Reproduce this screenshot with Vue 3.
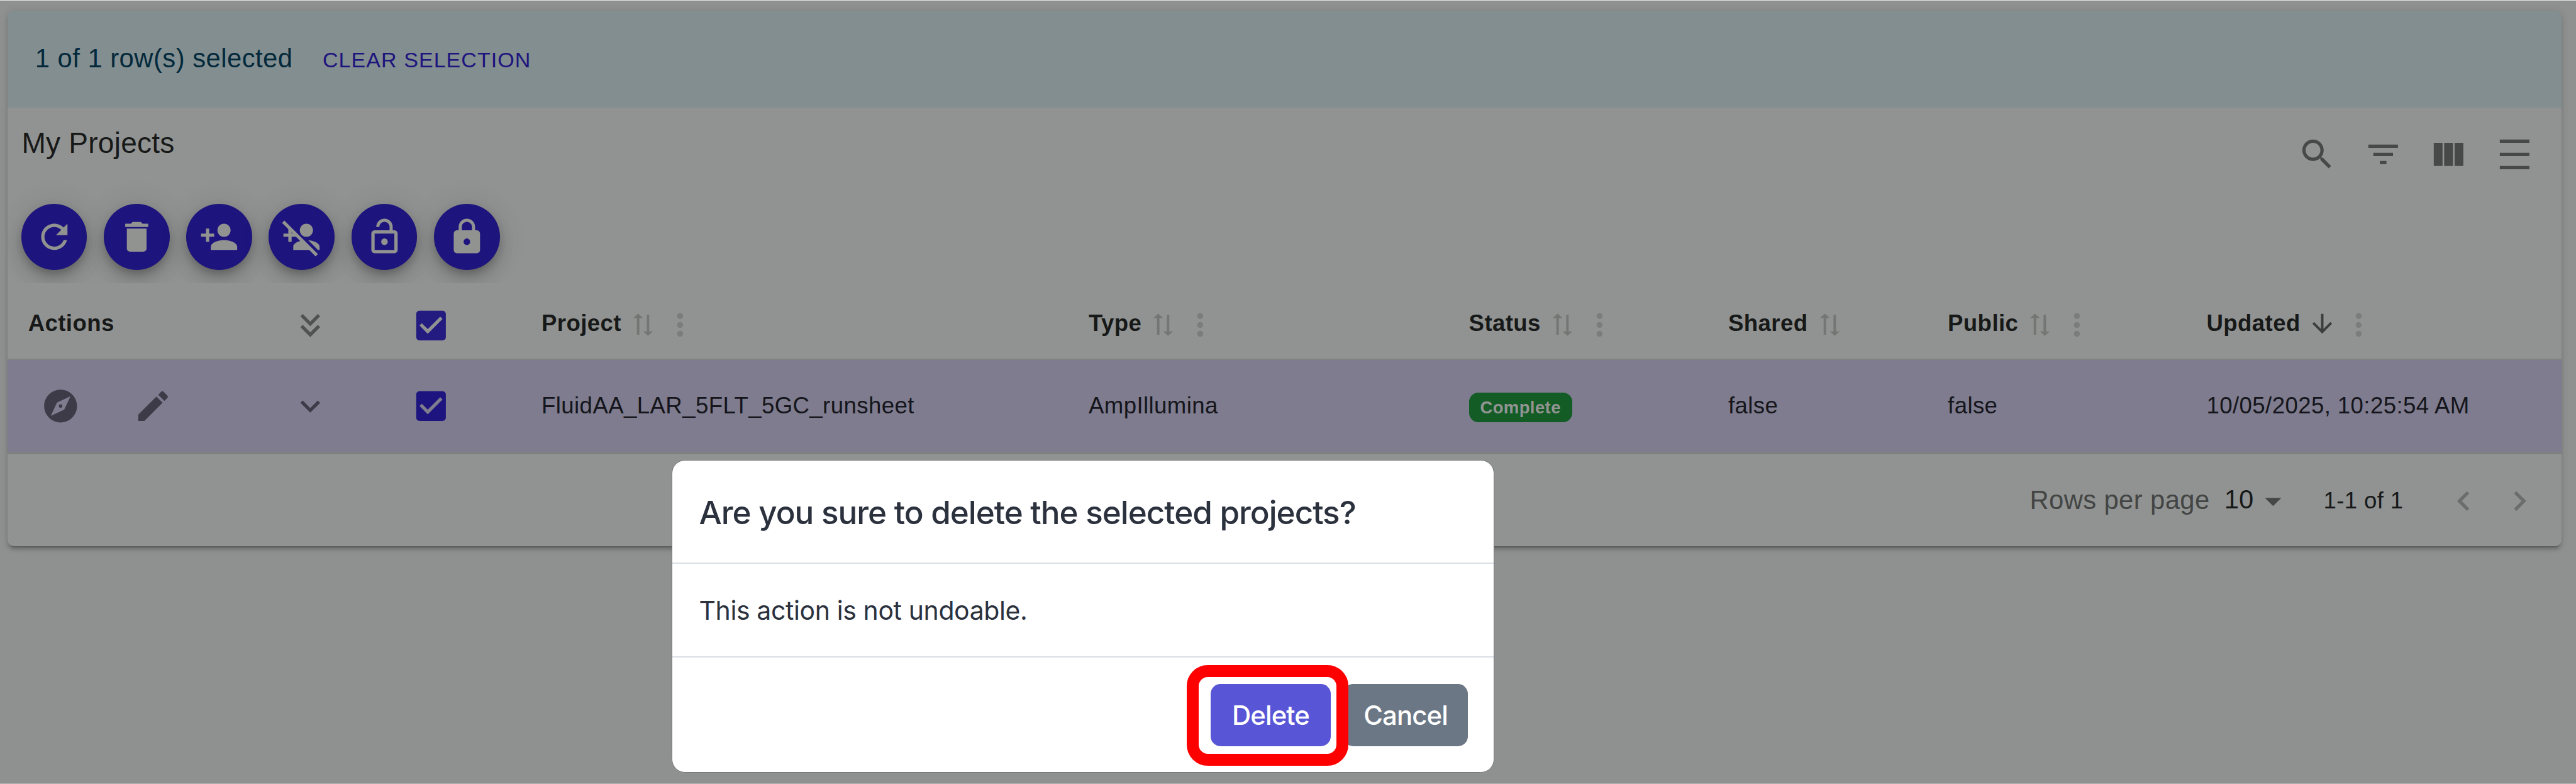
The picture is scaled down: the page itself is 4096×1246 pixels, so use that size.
<script setup>
const icons = {
  refresh: 'M17.65 6.35C16.2 4.9 14.21 4 12 4c-4.42 0-7.99 3.58-7.99 8s3.57 8 7.99 8c3.73 0 6.84-2.55 7.73-6h-2.08c-.82 2.33-3.04 4-5.65 4-3.31 0-6-2.69-6-6s2.69-6 6-6c1.66 0 3.14.69 4.22 1.78L13 11h7V4l-2.35 2.35z',
  trash: 'M6 19c0 1.1.9 2 2 2h8c1.1 0 2-.9 2-2V7H6v12zM19 4h-3.5l-1-1h-5l-1 1H5v2h14V4z',
  personAdd: 'M15 12c2.21 0 4-1.79 4-4s-1.79-4-4-4-4 1.79-4 4 1.79 4 4 4zm-9-2V7H4v3H1v2h3v3h2v-3h3v-2H6zm9 4c-2.67 0-8 1.34-8 4v2h16v-2c0-2.66-5.33-4-8-4z',
  lockOpen: 'M12 17c1.1 0 2-.9 2-2s-.9-2-2-2-2 .9-2 2 .9 2 2 2zm6-9h-1V6c0-2.76-2.24-5-5-5S7 3.24 7 6h1.9c0-1.71 1.39-3.1 3.1-3.1 1.71 0 3.1 1.39 3.1 3.1v2H6c-1.1 0-2 .9-2 2v10c0 1.1.9 2 2 2h12c1.1 0 2-.9 2-2V10c0-1.1-.9-2-2-2zm0 12H6V10h12v10z',
  lock: 'M18 8h-1V6c0-2.76-2.24-5-5-5S7 3.24 7 6v2H6c-1.1 0-2 .9-2 2v10c0 1.1.9 2 2 2h12c1.1 0 2-.9 2-2V10c0-1.1-.9-2-2-2zm-6 9c-1.1 0-2-.9-2-2s.9-2 2-2 2 .9 2 2-.9 2-2 2zm3.1-9H8.9V6c0-1.71 1.39-3.1 3.1-3.1 1.71 0 3.1 1.39 3.1 3.1v2z',
  search: 'M15.5 14h-.79l-.28-.27C15.41 12.59 16 11.11 16 9.5 16 5.91 13.09 3 9.5 3S3 5.91 3 9.5 5.91 16 9.5 16c1.61 0 3.09-.59 4.23-1.57l.27.28v.79l5 4.99L20.49 19l-4.99-5zm-6 0C7.01 14 5 11.99 5 9.5S7.01 5 9.5 5 14 7.01 14 9.5 11.99 14 9.5 14z',
  filter: 'M10 18h4v-2h-4v2zM3 6v2h18V6H3zm3 7h12v-2H6v2z',
  columns: 'M14.67 5v14H9.33V5h5.34zm1 14H21V5h-5.33v14zm-7.34 0V5H3v14h5.33z',
  density: 'M3 3h18v2H3zm0 16h18v2H3zm0-8h18v2H3z',
  doubleDown: 'M18 6.41 16.59 5 12 9.58 7.41 5 6 6.41l6 6zM18 13l-1.41-1.41L12 16.17l-4.59-4.58L6 13l6 6z',
  expand: 'M16.59 8.59 12 13.17 7.41 8.59 6 10l6 6 6-6z',
  checkbox: 'M19 3H5c-1.11 0-2 .9-2 2v14c0 1.1.89 2 2 2h14c1.11 0 2-.9 2-2V5c0-1.1-.89-2-2-2zm-9 14l-5-5 1.41-1.41L10 14.17l7.59-7.59L19 8l-9 9z',
  explore: 'M12 10.9c-.61 0-1.1.49-1.1 1.1s.49 1.1 1.1 1.1c.61 0 1.1-.49 1.1-1.1s-.49-1.1-1.1-1.1zM12 2C6.48 2 2 6.48 2 12s4.48 10 10 10 10-4.48 10-10S17.52 2 12 2zm2.19 12.19L6 18l3.81-8.19L18 6l-3.81 8.19z',
  edit: 'M3 17.25V21h3.75L17.81 9.94l-3.75-3.75L3 17.25zM20.71 7.04c.39-.39.39-1.02 0-1.41l-2.34-2.34c-.39-.39-1.02-.39-1.41 0l-1.83 1.83 3.75 3.75 1.83-1.83z',
  sort: 'm22 8-4-4v3H3v2h15v3l4-4zM2 16l4 4v-3h15v-2H6v-3l-4 4z',
  down: 'M20 12l-1.41-1.41L13 16.17V4h-2v12.17l-5.58-5.59L4 12l8 8 8-8z',
  more: 'M12 8c1.1 0 2-.9 2-2s-.9-2-2-2-2 .9-2 2 .9 2 2 2zm0 2c-1.1 0-2 .9-2 2s.9 2 2 2 2-.9 2-2-.9-2-2-2zm0 6c-1.1 0-2 .9-2 2s.9 2 2 2 2-.9 2-2-.9-2-2-2z',
  dropDown: 'M7 10l5 5 5-5z',
  prev: 'M15.41 7.41 14 6l-6 6 6 6 1.41-1.41L10.83 12z',
  next: 'M10 6 8.59 7.41 13.17 12l-4.58 4.59L10 18l6-6z',
}

const bulkActions = ['refresh', 'trash', 'personAdd', 'personAddOff', 'lockOpen', 'lock']
const tableTools = ['search', 'filter', 'columns', 'density']
const columns = [
  { label: 'Project', menu: true },
  { label: 'Type', menu: true },
  { label: 'Status', menu: true },
  { label: 'Shared', menu: false },
  { label: 'Public', menu: true },
  { label: 'Updated', menu: true, sorted: true },
]
</script>

<template>
  <div class="screen">
    <section class="card">
      <div class="banner">
        <span class="banner-text">1 of 1 row(s) selected</span>
        <button class="clear">CLEAR SELECTION</button>
      </div>

      <header class="toolbar">
        <div>
          <h1 class="title">My Projects</h1>
          <div class="fabs">
            <button v-for="name in bulkActions" :key="name" class="fab">
              <svg v-if="name === 'personAddOff'" viewBox="0 0 24 24" class="icon">
                <defs>
                  <mask id="slash-cut">
                    <rect width="24" height="24" fill="#fff" />
                    <path d="M14 13.3 24 23.3" stroke="#000" stroke-width="1.9" />
                  </mask>
                </defs>
                <path :d="icons.personAdd" mask="url(#slash-cut)" />
                <path d="M.9 2.8 21.3 23.2" stroke="currentColor" stroke-width="2" />
              </svg>
              <svg v-else viewBox="0 0 24 24" class="icon"><path :d="icons[name]" /></svg>
            </button>
          </div>
        </div>
        <div class="tools">
          <svg v-for="name in tableTools" :key="name" viewBox="0 0 24 24" class="icon"><path :d="icons[name]" /></svg>
        </div>
      </header>

      <div class="row head">
        <span>Actions</span>
        <span class="mid"><svg viewBox="0 0 24 24" class="icon grey"><path :d="icons.doubleDown" /></svg></span>
        <span class="mid select"><svg viewBox="0 0 24 24" class="icon check soft"><path :d="icons.checkbox" /></svg></span>
        <span v-for="col in columns" :key="col.label" class="label">
          <span>{{ col.label }}</span>
          <svg v-if="col.sorted" viewBox="0 0 24 24" class="sort active"><path :d="icons.down" /></svg>
          <svg v-else viewBox="0 0 24 24" class="sort idle"><path :d="icons.sort" /></svg>
          <svg v-if="col.menu" viewBox="0 0 24 24" class="more"><path :d="icons.more" /></svg>
        </span>
      </div>

      <div class="row item">
        <span class="row-actions">
          <svg viewBox="0 0 24 24" class="icon"><path :d="icons.explore" /></svg>
          <svg viewBox="0 0 24 24" class="icon"><path :d="icons.edit" /></svg>
        </span>
        <span class="mid"><svg viewBox="0 0 24 24" class="icon dark"><path :d="icons.expand" /></svg></span>
        <span class="mid select"><svg viewBox="0 0 24 24" class="icon check"><path :d="icons.checkbox" /></svg></span>
        <span class="val">FluidAA_LAR_5FLT_5GC_runsheet</span>
        <span class="val">AmpIllumina</span>
        <span><span class="badge">Complete</span></span>
        <span class="val">false</span>
        <span class="val">false</span>
        <span class="val">10/05/2025, 10:25:54 AM</span>
      </div>

      <footer class="pager">
        <span class="rpp">Rows per page</span>
        <span class="size">10</span>
        <svg viewBox="0 0 24 24" class="icon caret"><path :d="icons.dropDown" /></svg>
        <span class="range">1-1 of 1</span>
        <svg viewBox="0 0 24 24" class="icon nav"><path :d="icons.prev" /></svg>
        <svg viewBox="0 0 24 24" class="icon nav"><path :d="icons.next" /></svg>
      </footer>
    </section>

    <div class="modal">
      <div class="modal-head">Are you sure to delete the selected projects?</div>
      <div class="modal-body">This action is not undoable.</div>
      <div class="modal-foot">
        <button class="btn primary"><span>Delete</span></button>
        <button class="btn secondary"><span>Cancel</span></button>
      </div>
      <div class="highlight"></div>
    </div>
  </div>
</template>

<style>
body {
  margin: 0;
  overflow: hidden;
}
</style>

<style scoped>
.screen {
  position: relative;
  zoom: 0.930909;
  box-sizing: border-box;
  width: 4400px;
  height: 1338.5px;
  padding: 17px 24.5px 0 13px;
  overflow: hidden;
  border-top: 2px solid #dfe4e4;
  border-bottom: 1px solid #b4b6b5;
  background: #8f9190;
  font-family: "Liberation Sans", Arial, sans-serif;
  color: #171918;
}
.screen * {
  box-sizing: border-box;
}
.icon {
  display: block;
  width: 67.4px;
  height: 67.4px;
  fill: currentColor;
  flex: none;
}
button {
  border: 0;
  padding: 0;
  margin: 0;
  font: inherit;
  color: inherit;
}
.card {
  height: 914px;
  border-radius: 11px;
  background: #919392;
  box-shadow: 0 8px 3px -6px rgba(0, 0, 0, 0.2), 0 5.5px 5.5px 0 rgba(0, 0, 0, 0.14), 0 2px 14px 0 rgba(0, 0, 0, 0.12);
}
.banner {
  display: flex;
  align-items: center;
  height: 166px;
  padding-left: 47px;
  border-radius: 11px 11px 0 0;
  background: #828e90;
}
.banner-text {
  padding-bottom: 2px;
  font-size: 44.9px;
  letter-spacing: 0.5px;
  color: #03293b;
}
.clear {
  margin: 2px 0 0 51px;
  background: none;
  font-size: 36.6px;
  letter-spacing: 1.1px;
  color: #1e147e;
}
.toolbar {
  display: flex;
  justify-content: space-between;
  height: 299px;
  padding: 28px 46.5px 0 23px;
  overflow: hidden;
}
.title {
  margin: 0;
  padding-left: 1px;
  font-size: 49.5px;
  line-height: 66px;
  font-weight: 400;
  letter-spacing: 0.25px;
}
.fabs {
  display: flex;
  gap: 28.4px;
  margin-top: 70.5px;
}
.fab {
  display: flex;
  align-items: center;
  justify-content: center;
  width: 112.6px;
  height: 112.6px;
  border-radius: 50%;
  background: #1e147d;
  color: #919391;
  box-shadow: 0 8.4px 14px -3px rgba(0, 0, 0, 0.2), 0 17px 28px 0 rgba(0, 0, 0, 0.14), 0 3px 50px 0 rgba(0, 0, 0, 0.12);
}
.tools {
  display: flex;
  gap: 45.1px;
  padding-top: 18px;
  color: #474948;
}
.row {
  display: grid;
  grid-template-columns: 399.5px 166px 311.5px 934.5px 649.5px 443px 375px 442px 1fr;
  align-items: center;
  padding-left: 35px;
  font-size: 39.3px;
  letter-spacing: 0.44px;
  white-space: nowrap;
}
.head {
  height: 131px;
  padding-top: 10px;
  border-bottom: 3px solid #818380;
  font-weight: 700;
}
.label {
  display: flex;
  align-items: center;
}
.mid {
  display: flex;
  justify-content: center;
}
.head .mid {
  padding-top: 7px;
}
.select {
  padding-right: 66px;
}
.grey {
  color: #505251;
}
.dark {
  color: #3c3b47;
}
.check {
  color: #1e147f;
}
.check.soft {
  color: #231b80;
}
.sort {
  width: 50.5px;
  height: 50.5px;
  margin-left: 12px;
  fill: #747674;
}
.sort.idle {
  transform: rotate(-90deg) scaleX(0.9) translateX(-2px);
}
.sort.active {
  margin-top: 1px;
  fill: #3c3e3d;
}
.more {
  width: 61px;
  height: 61px;
  margin: 4px 0 0 7px;
  fill: #7b7d7c;
}
.item {
  height: 162px;
  background: #7e7c8e;
  border-bottom: 4px solid #7f817f;
  color: #15151b;
}
.row-actions {
  display: flex;
  gap: 90px;
  padding-left: 22px;
  color: #3c3b47;
}
.val {
  padding-bottom: 2px;
}
.badge {
  display: block;
  width: max-content;
  margin-top: 4px;
  padding: 10.3px 19.2px;
  border-radius: 16px;
  background: #135c26;
  font-size: 29.5px;
  line-height: 1;
  font-weight: 700;
  color: #929492;
}
.pager {
  display: flex;
  align-items: center;
  justify-content: flex-end;
  height: 156px;
  padding: 3px 38.5px 0 0;
  color: #171918;
}
.rpp {
  padding-bottom: 2px;
  font-size: 44.9px;
  letter-spacing: 0.42px;
  color: #434544;
}
.size {
  padding: 0 0 5px 25px;
  font-size: 44.9px;
}
.caret {
  margin: 0;
  color: #454746;
}
.range {
  padding: 0 0 0 52px;
  margin-right: 69px;
  font-size: 39.3px;
  letter-spacing: 0.42px;
}
.nav {
  color: #6b6d6c;
}
.nav + .nav {
  margin-left: 28px;
}
.modal {
  position: absolute;
  left: 1147.5px;
  top: 784.5px;
  width: 1405px;
  height: 534px;
  border: 1.5px solid #767877;
  border-radius: 23px;
  background: #fff;
  font-family: Inter, "Open Sans", sans-serif;
  color: #2b313d;
  white-space: nowrap;
}
.modal-head {
  display: flex;
  align-items: center;
  height: 176px;
  padding: 2px 0 0 45.5px;
  border-bottom: 3px solid #dbdfe6;
  font-size: 55px;
  font-weight: 500;
  letter-spacing: -1.1px;
}
.modal-body {
  display: flex;
  align-items: center;
  height: 160px;
  padding: 1px 0 0 45.5px;
  border-bottom: 3px solid #dbdfe6;
  font-size: 44px;
  letter-spacing: -0.4px;
}
.modal-foot {
  display: flex;
  justify-content: flex-end;
  gap: 22px;
  padding: 45px 44.5px 0 0;
}
.btn {
  display: flex;
  align-items: center;
  justify-content: center;
  height: 106.5px;
  padding-top: 2px;
  border-radius: 17px;
  font-size: 44.9px;
  font-weight: 500;
  letter-spacing: -0.9px;
  color: #fff;
}
.primary {
  width: 205px;
  background: #5856d6;
}
.secondary {
  width: 212px;
  background: #6b7785;
}
.highlight {
  position: absolute;
  left: 879px;
  top: 349px;
  width: 276px;
  height: 172px;
  border: 21px solid #f00;
  border-radius: 36px;
}
</style>
